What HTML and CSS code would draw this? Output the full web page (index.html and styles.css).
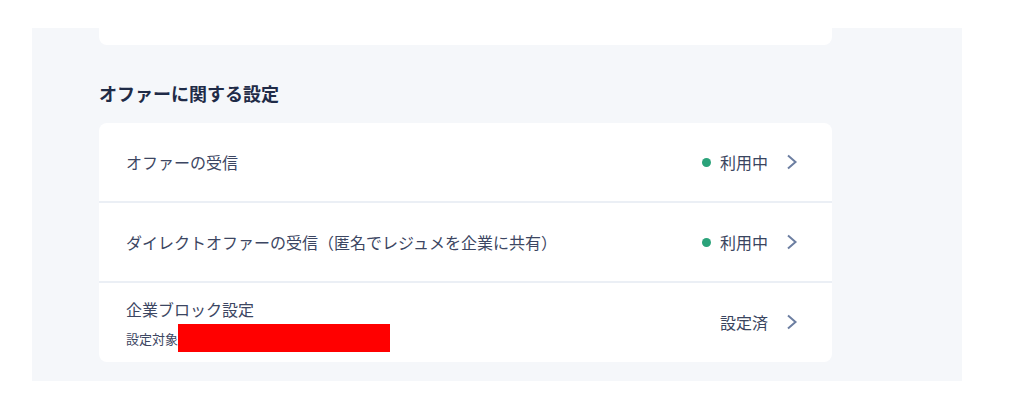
FILE: index.html
```html
<!DOCTYPE html>
<html lang="ja">
<head>
<meta charset="utf-8">
<title>オファーに関する設定</title>
<link rel="stylesheet" href="styles.css">
</head>
<body>
<div class="panel">
  <div class="card card-top"></div>
  <h2 class="section-title">オファーに関する設定</h2>
  <div class="card list">
    <a class="row">
      <span class="label">オファーの受信</span>
      <span class="status"><span class="dot"></span>利用中</span>
      <svg class="chev" width="12" height="16" viewBox="0 0 12 16"><path d="M2 1.5 L9.5 8 L2 14.5" fill="none" stroke="currentColor" stroke-width="2"/></svg>
    </a>
    <a class="row">
      <span class="label">ダイレクトオファーの受信（匿名でレジュメを企業に共有）</span>
      <span class="status"><span class="dot"></span>利用中</span>
      <svg class="chev" width="12" height="16" viewBox="0 0 12 16"><path d="M2 1.5 L9.5 8 L2 14.5" fill="none" stroke="currentColor" stroke-width="2"/></svg>
    </a>
    <a class="row row-tall">
      <span class="label-block">
        <span class="label">企業ブロック設定</span>
        <span class="sub">設定対象<span class="redact"></span></span>
      </span>
      <span class="status">設定済</span>
      <svg class="chev" width="12" height="16" viewBox="0 0 12 16"><path d="M2 1.5 L9.5 8 L2 14.5" fill="none" stroke="currentColor" stroke-width="2"/></svg>
    </a>
  </div>
</div>
</body>
</html>
```
FILE: styles.css
```css
html, body {
  margin: 0;
  padding: 0;
  background: #ffffff;
  font-family: "Noto Sans CJK JP", "Noto Sans", sans-serif;
}
.panel {
  margin: 28px 0 0 32px;
  width: 930px;
  height: 353px;
  background: #f5f7fa;
  padding-left: 67px;
  box-sizing: border-box;
}
.card {
  width: 733px;
  background: #ffffff;
  border-radius: 8px;
}
.card-top {
  height: 17px;
  border-radius: 0 0 8px 8px;
}
.section-title {
  margin: 34px 0 16px;
  font-size: 18px;
  line-height: 28px;
  font-weight: 700;
  color: #1f2b47;
}
.list {
  display: flex;
  flex-direction: column;
}
.row {
  display: flex;
  align-items: center;
  height: 78px;
  padding: 0 34px 0 27px;
  border-bottom: 2px solid #ebeff5;
  color: #3c4662;
  font-size: 16px;
}
.row:last-child {
  border-bottom: none;
}
.label {
  flex: 1;
  line-height: 24px;
}
.status {
  display: flex;
  align-items: center;
  gap: 9px;
  margin-left: auto;
  line-height: 24px;
  color: #3a4560;
}
.dot {
  width: 9px;
  height: 9px;
  border-radius: 50%;
  background: #2ba37a;
}
.chev {
  margin-left: 18px;
  color: #6c7ea1;
}
.row-tall {
  align-items: stretch;
  height: auto;
  padding-top: 14px;
  padding-bottom: 10px;
}
.row-tall .status, .row-tall .chev {
  align-self: center;
  margin-bottom: 6px;
}
.label-block {
  flex: 1;
  display: flex;
  flex-direction: column;
}
.sub {
  display: flex;
  align-items: center;
  height: 28px;
  margin-top: 3px;
  font-size: 13px;
}
.redact {
  width: 212px;
  height: 28px;
  background: #ff0000;
}
```
